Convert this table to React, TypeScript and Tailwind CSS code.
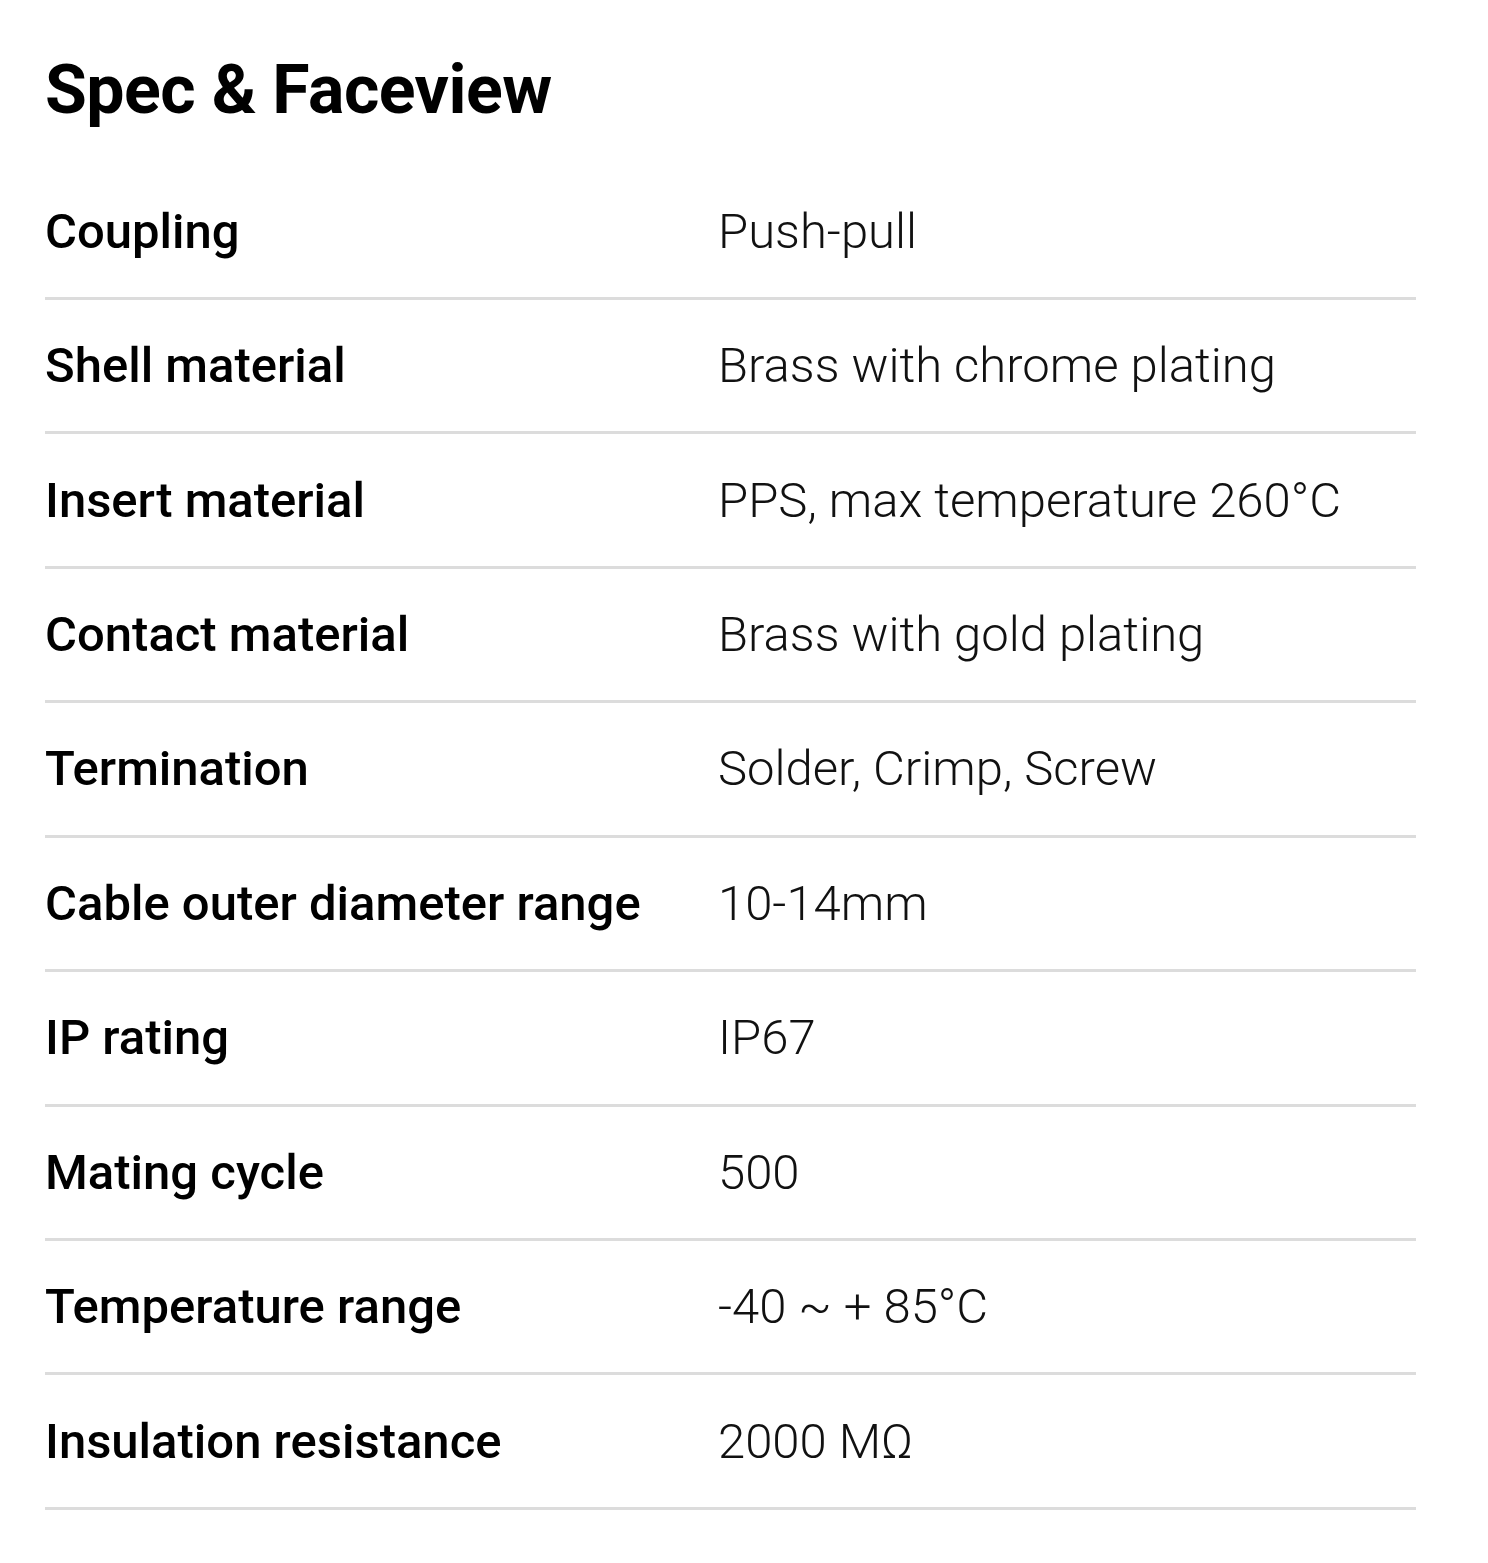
import React from "react";

const specs = [
  { label: "Coupling", value: "Push-pull" },
  { label: "Shell material", value: "Brass with chrome plating" },
  { label: "Insert material", value: "PPS, max temperature 260°C" },
  { label: "Contact material", value: "Brass with gold plating" },
  { label: "Termination", value: "Solder, Crimp, Screw" },
  { label: "Cable outer diameter range", value: "10-14mm" },
  { label: "IP rating", value: "IP67" },
  { label: "Mating cycle", value: "500" },
  { label: "Temperature range", value: "-40 ~ + 85°C" },
  { label: "Insulation resistance", value: "2000 MΩ" },
];

export default function App() {
  return (
    <div className="min-h-[1563px] bg-white font-['Roboto',sans-serif] text-black">
      <div className="ml-[45px] w-[1371px] pt-[56px]">
        <h2 className="mb-[41.5px] text-[68px] font-bold leading-none tracking-[-0.5px]">
          Spec &amp; Faceview
        </h2>
        <div>
          {specs.map((s) => (
            <div
              key={s.label}
              className="flex h-[134.44px] items-center border-b-[3px] border-[#dcdcdc]"
            >
              <div className="w-[673px] shrink-0 text-[49px] font-medium leading-none">
                {s.label}
              </div>
              <div className="text-[49px] font-light leading-none text-[#111]">
                {s.value}
              </div>
            </div>
          ))}
        </div>
      </div>
    </div>
  );
}
